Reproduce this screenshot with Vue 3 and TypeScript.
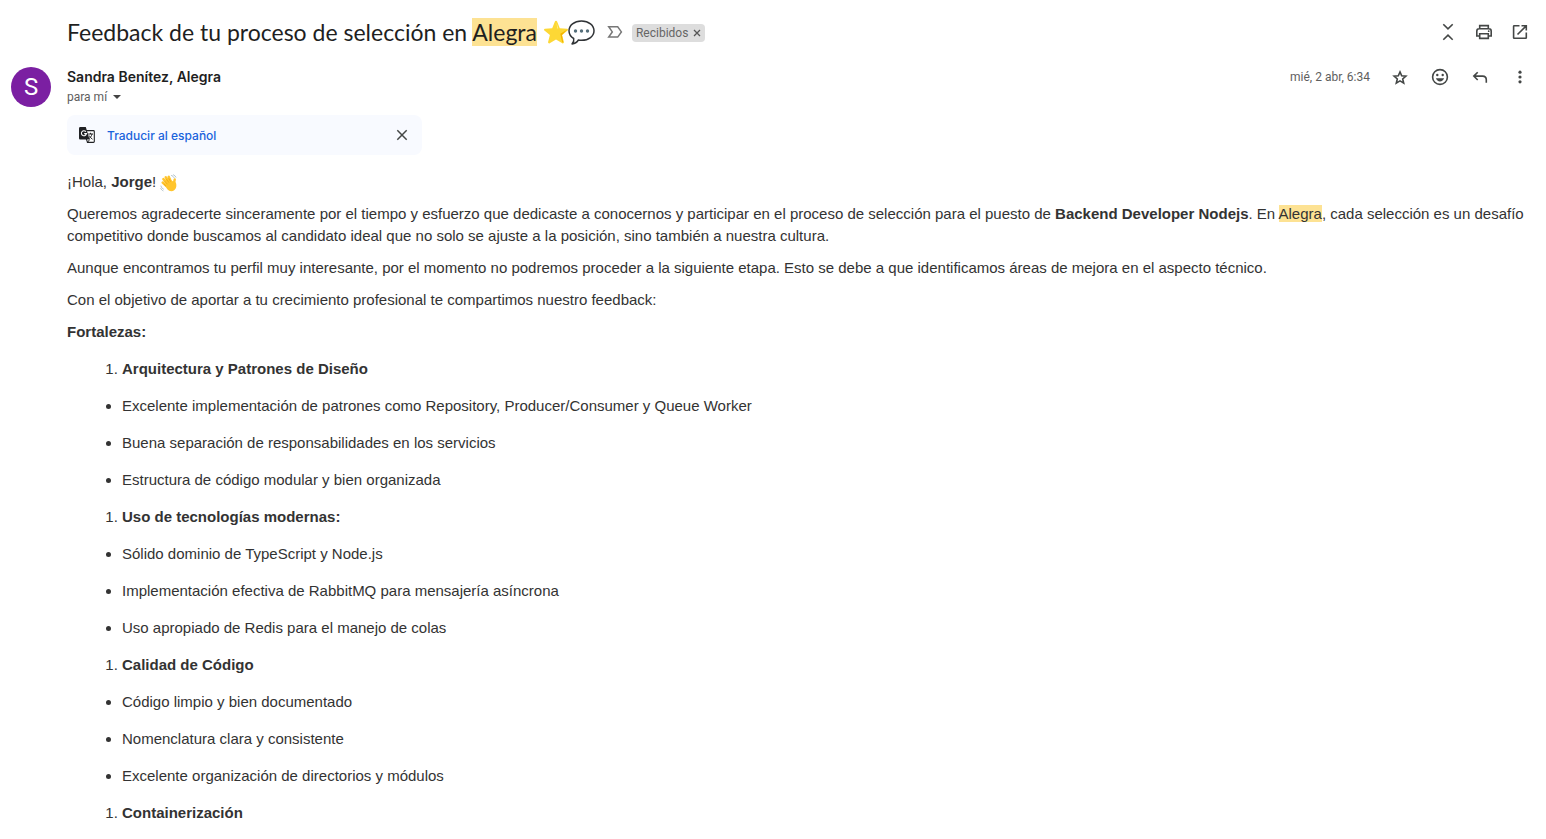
<script setup lang="ts">
interface Section {
  title: string
  points: string[]
}

const sections: Section[] = [
  {
    title: 'Arquitectura y Patrones de Diseño',
    points: [
      'Excelente implementación de patrones como Repository, Producer/Consumer y Queue Worker',
      'Buena separación de responsabilidades en los servicios',
      'Estructura de código modular y bien organizada',
    ],
  },
  {
    title: 'Uso de tecnologías modernas:',
    points: [
      'Sólido dominio de TypeScript y Node.js',
      'Implementación efectiva de RabbitMQ para mensajería asíncrona',
      'Uso apropiado de Redis para el manejo de colas',
    ],
  },
  {
    title: 'Calidad de Código',
    points: [
      'Código limpio y bien documentado',
      'Nomenclatura clara y consistente',
      'Excelente organización de directorios y módulos',
    ],
  },
  { title: 'Containerización', points: [] },
]
</script>

<template>
  <main class="mail">
    <header class="subject-row">
      <h1 class="subject">Feedback de tu proceso de selección en <mark>Alegra</mark></h1>
      <span class="emojis">
        <svg class="emoji-star" viewBox="0 0 24 24" role="img" aria-label="Estrella">
          <path d="M12 .8c.5 0 .9.3 1.100.8l2.700 6.600 7.200.5c1 .1 1.300 1.200.6 1.800l-5.500 4.600 1.800 7c.2 1-.8 1.700-1.600 1.200L12 19.500l-6.300 3.800c-.8.5-1.800-.2-1.600-1.200l1.800-7L.4 10.500c-.7-.6-.4-1.700.6-1.800l7.200-.5 2.700-6.600c.2-.5.6-.8 1.100-.8z" fill="#fdd835" />
          <path d="M12.500 2.500l1.700 6.200-1-.4z" fill="#fff59d" />
          <path d="M23.500 9.500l-7.200 4.200 1.900 8.800 1-.6-1.300-6.800z" fill="#f4b400" />
        </svg>
        <svg class="emoji-bubble" viewBox="0 0 27 25" role="img" aria-label="Globo de diálogo">
          <path d="M13.500 1C6.200 1 1 5.200 1 10.800c0 3.200 1.800 6 4.700 7.700.4 2-.2 4-1.600 5.400 2.700-.2 5-1.800 6.300-3.900 1 .2 2 .3 3.100.3 7.300 0 12.500-4 12.500-9.500S20.800 1 13.500 1z" fill="#fff" stroke="#303336" stroke-width="1.500" stroke-linejoin="round" />
          <g fill="#546e7a"><circle cx="7.500" cy="11" r="1.700" /><circle cx="13.500" cy="11" r="1.700" /><circle cx="19.500" cy="11" r="1.700" /></g>
        </svg>
      </span>
      <button class="plain important" type="button" aria-label="Marcar como importante">
        <svg width="16" height="14" viewBox="0 0 16 14" fill="none" stroke="#777" stroke-width="1.500">
          <path d="M1.700 1.700h9l3.700 5.200-3.700 5.200h-9L5.300 6.900z" />
        </svg>
      </button>
      <span class="chip">
        Recibidos
        <button class="plain" type="button" aria-label="Quitar etiqueta Recibidos">
          <svg width="8" height="8" viewBox="0 0 8 8" fill="none" stroke="#555" stroke-width="1.300"><path d="M1 1l6 6M7 1L1 7" /></svg>
        </button>
      </span>
      <nav class="actions top-actions" aria-label="Conversación">
        <button class="plain" type="button" aria-label="Contraer todo">
          <svg class="icon" viewBox="0 0 20 20"><path class="line" d="M5.300 2.300L10 6.900l4.700-4.600M5.300 17.700L10 13.100l4.700 4.600" /></svg>
        </button>
        <button class="plain" type="button" aria-label="Imprimir">
          <svg class="icon" viewBox="0 0 20 20">
            <path class="line" d="M5.700 6.500V3.600h8.600v2.900M5.500 14H2.800V9.200c0-1.500.9-2.400 2.200-2.400h10c1.300 0 2.200.9 2.200 2.400V14h-2.700" />
            <path class="line" d="M5.700 11.700h8.600v4.700H5.700z" />
            <circle cx="14.700" cy="9.200" r=".9" />
          </svg>
        </button>
        <button class="plain" type="button" aria-label="En una ventana nueva">
          <svg class="icon" viewBox="0 0 20 20"><path class="line" d="M9.500 3.700H4.200a.6.6 0 0 0-.6.6v11.400c0 .4.300.6.600.6h11.500c.4 0 .6-.2.6-.6V10.500M11.500 3.700h4.800v4.800M16 4L7.500 12.500" /></svg>
        </button>
      </nav>
    </header>

    <section class="message">
      <div class="avatar" aria-hidden="true">S</div>
      <div class="content">
        <div class="sender-row">
          <div class="sender">
            <h2>Sandra Benítez, Alegra</h2>
            <button class="plain recipient" type="button">
              para mí
              <svg width="8" height="4" viewBox="0 0 8 4" fill="#444"><path d="M0 0h8L4 4z" /></svg>
            </button>
          </div>
          <div class="actions">
            <time>mié, 2 abr, 6:34</time>
            <button class="plain" type="button" aria-label="Destacar">
              <svg class="icon" viewBox="0 0 20 20"><path class="star" d="M10 4.900l1.700 3.900 4.200.4-3.200 2.800 1 4.100L10 13.900l-3.700 2.200 1-4.100-3.200-2.800 4.200-.4z" /></svg>
            </button>
            <button class="plain" type="button" aria-label="Añadir reacción">
              <svg class="icon" viewBox="0 0 20 20">
                <circle class="line" cx="10" cy="10" r="7.400" />
                <circle cx="7.300" cy="8" r="1.200" /><circle cx="12.700" cy="8" r="1.200" />
                <path d="M5.900 11.300h8.200c-.6 1.900-2.200 3.100-4.100 3.100s-3.500-1.200-4.100-3.100z" />
              </svg>
            </button>
            <button class="plain" type="button" aria-label="Responder">
              <svg class="icon" viewBox="0 0 20 20"><path class="line" d="M7.700 5.200L3.800 9.100l3.900 3.900M4 9.100h8.600c2.200 0 3.700 1.500 3.700 3.700v3" /></svg>
            </button>
            <button class="plain" type="button" aria-label="Más">
              <svg class="icon" viewBox="0 0 20 20"><circle cx="10" cy="5.200" r="1.600" /><circle cx="10" cy="10" r="1.600" /><circle cx="10" cy="14.800" r="1.600" /></svg>
            </button>
          </div>
        </div>

        <div class="translate">
          <svg width="16" height="16" viewBox="0 0 16 16" aria-hidden="true">
            <path d="M7 3.600h7.400c.5 0 .9.4.9.9v10c0 .5-.4.9-.9.9H8.500L7 11z" fill="#fff" stroke="#202124" stroke-width="1.100" />
            <path d="M1.300 0h5.500l3.800 12.500H1.300C.6 12.500 0 12 0 11.200V1.300C0 .6.600 0 1.300 0z" fill="#202124" />
            <path d="M6.900 4.700A2.500 2.500 0 1 0 7.400 6.600H5.200" fill="none" stroke="#fff" stroke-width="1.100" />
            <path d="M9.200 7h4.800M11.500 5.800V7M13 7c-.4 2-1.600 3.500-3 4.600M10.300 8.600c.7 1.600 1.800 2.700 3.200 3.600M8.500 15.300l2.200-2.800" fill="none" stroke="#202124" />
          </svg>
          <a href="#traducir">Traducir al español</a>
          <button class="plain" type="button" aria-label="Cerrar">
            <svg width="12" height="12" viewBox="0 0 12 12" fill="none" stroke="#444746" stroke-width="1.500"><path d="M1.300 1.300l9.400 9.400M10.700 1.300l-9.400 9.400" /></svg>
          </button>
        </div>

        <article class="body">
          <p>
            ¡Hola, <strong>Jorge</strong>!
            <svg class="wave" viewBox="0 0 18 18" role="img" aria-label="Mano saludando">
              <g fill="none" stroke="#ffc52e" stroke-linecap="round" stroke-width="2.500">
                <path d="M8 10L3.400 5.200M9 8.500L5.700 3.200M11 8L8.700 2.800M6.500 12L2.700 8.500" />
                <path d="M14.500 11c-.4-2.500-.5-4 .2-5.500" />
              </g>
              <path d="M4.500 11l4-6L12.500 7l1.300 1.500 2.100 0c.9 3 .6 5.800-1.400 7.500-2.300 1.900-5.300 1.400-7.200-.7z" fill="#ffc52e" />
              <path d="M7.500 10.300L4.300 6.900M9 8.700L6.200 4.800M10.700 7.700L8.700 4.200M6 12L3.700 9.800" fill="none" stroke="#e59600" stroke-width=".5" />
              <path d="M11.500 1.500c1.200.4 2.100 1.200 2.600 2.300M13.500.8c1.100.5 1.900 1.300 2.400 2.300M1 12c.3 1.400 1.100 2.500 2.400 3.100M.8 14.500c.5 1.100 1.200 1.800 2.200 2.300" fill="none" stroke="#9fb4bf" stroke-width=".8" stroke-linecap="round" />
            </svg>
          </p>
          <p>
            Queremos agradecerte sinceramente por el tiempo y esfuerzo que dedicaste a conocernos y participar en el proceso de selección para el puesto de <strong>Backend Developer Nodejs</strong>. En <mark>Alegra</mark>, cada selección es un desafío competitivo donde buscamos al candidato ideal que no solo se ajuste a la posición, sino también a nuestra cultura.
          </p>
          <p>Aunque encontramos tu perfil muy interesante, por el momento no podremos proceder a la siguiente etapa. Esto se debe a que identificamos áreas de mejora en el aspecto técnico.</p>
          <p>Con el objetivo de aportar a tu crecimiento profesional te compartimos nuestro feedback:</p>
          <p><strong>Fortalezas:</strong></p>
          <template v-for="section in sections" :key="section.title">
            <ol><li><strong>{{ section.title }}</strong></li></ol>
            <ul v-if="section.points.length">
              <li v-for="point in section.points" :key="point">{{ point }}</li>
            </ul>
          </template>
        </article>
      </div>
    </section>
  </main>
</template>

<style>
body {
  margin: 0;
  background: #fff;
}
html {
  overflow: hidden;
}
</style>

<style scoped>
.mail {
  padding: 12px 16px 0 11px;
  font-family: Roboto, Arial, sans-serif;
  color: #1f1f1f;
}
.plain {
  display: inline-flex;
  align-items: center;
  padding: 0;
  border: 0;
  background: none;
  font: inherit;
  color: inherit;
  cursor: pointer;
}
.subject-row {
  display: flex;
  align-items: center;
  height: 40px;
  padding-left: 56px;
}
.subject {
  margin: 0;
  font-family: Lato, Roboto, sans-serif;
  font-size: 23px;
  line-height: 28px;
  font-weight: 400;
}
mark {
  background: #fde293;
  color: inherit;
}
.emojis {
  display: inline-flex;
  align-items: center;
  margin-left: 7px;
}
.emoji-star {
  width: 24px;
  height: 24px;
}
.emoji-bubble {
  width: 27px;
  height: 25px;
}
.important {
  margin-left: 12px;
}
.chip {
  display: inline-flex;
  align-items: center;
  gap: 5px;
  height: 18px;
  margin: 2px 0 0 9px;
  padding: 0 4px;
  border-radius: 4px;
  background: #ddd;
  color: #666;
  font-size: 12px;
}
.actions {
  display: flex;
  align-items: center;
  gap: 20px;
  height: 20px;
}
.top-actions {
  gap: 16px;
  margin-left: auto;
}
.icon {
  width: 20px;
  height: 20px;
  fill: #444746;
}
.line,
.star {
  fill: none;
  stroke: #444746;
  stroke-width: 1.6px;
}
.message {
  display: flex;
  gap: 16px;
  padding-top: 15px;
}
.avatar {
  display: flex;
  flex: none;
  align-items: center;
  justify-content: center;
  width: 40px;
  height: 40px;
  border-radius: 50%;
  background: #7b1fa2;
  color: #fff;
  font-size: 24px;
}
.content {
  flex: 1;
  min-width: 0;
}
.sender-row {
  display: flex;
  justify-content: space-between;
  height: 48px;
}
.sender {
  display: flex;
  flex-direction: column;
  align-items: flex-start;
}
.sender h2 {
  margin: 0;
  font-family: Inter, Roboto, sans-serif;
  font-size: 14px;
  line-height: 20px;
  font-weight: 600;
}
.recipient {
  gap: 6px;
  font-size: 12px;
  line-height: 20px;
  color: #5e5e5e;
}
time {
  font-size: 12px;
  color: #5e5e5e;
}
.translate {
  display: flex;
  align-items: center;
  gap: 12px;
  box-sizing: border-box;
  width: 355px;
  height: 40px;
  padding: 0 14px 0 12px;
  border-radius: 8px;
  background: #f8faff;
}
.translate a {
  flex: 1;
  color: #1a63dc;
  font-family: Inter, Roboto, sans-serif;
  font-size: 12px;
  font-weight: 500;
  text-decoration: none;
}
.body {
  padding-top: 16px;
  font-family: "Liberation Sans", Arial, sans-serif;
  font-size: 15px;
  line-height: 22px;
  color: #333;
}
.body p {
  margin: 0 0 10px;
}
.wave {
  width: 18px;
  height: 18px;
  vertical-align: -5px;
}
.body ol,
.body ul {
  margin: 0;
  padding-left: 55px;
}
.body li {
  margin: 15px 0;
}
</style>
